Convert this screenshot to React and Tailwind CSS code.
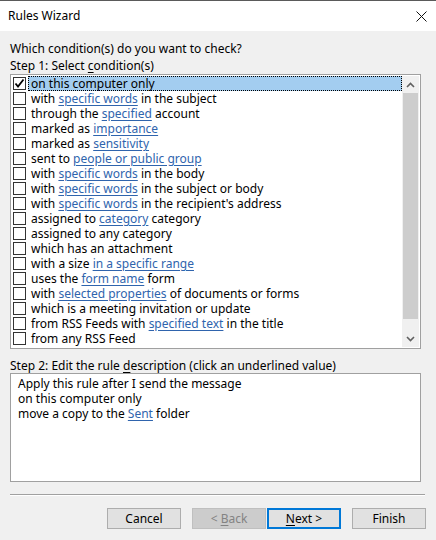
const conditions = [
  ["on this computer only"],
  ["with ", { link: "specific words" }, " in the subject"],
  ["through the ", { link: "specified" }, " account"],
  ["marked as ", { link: "importance" }],
  ["marked as ", { link: "sensitivity" }],
  ["sent to ", { link: "people or public group" }],
  ["with ", { link: "specific words" }, " in the body"],
  ["with ", { link: "specific words" }, " in the subject or body"],
  ["with ", { link: "specific words" }, " in the recipient's address"],
  ["assigned to ", { link: "category" }, " category"],
  ["assigned to any category"],
  ["which has an attachment"],
  ["with a size ", { link: "in a specific range" }],
  ["uses the ", { link: "form name" }, " form"],
  ["with ", { link: "selected properties" }, " of documents or forms"],
  ["which is a meeting invitation or update"],
  ["from RSS Feeds with ", { link: "specified text" }, " in the title"],
  ["from any RSS Feed"],
];

const Segments = ({ parts }) => (
  <span className="whitespace-pre">
    {parts.map((p, i) =>
      typeof p === "string" ? (
        p
      ) : (
        <span key={i} className="text-[#2f64ad] underline underline-offset-[2px] decoration-[#2f64ad]">
          {p.link}
        </span>
      )
    )}
  </span>
);

const Checkbox = ({ checked }) => (
  <div className="w-[13px] h-[13px] border border-[#333333] bg-white flex items-center justify-center shrink-0">
    {checked && (
      <svg width="11" height="11" viewBox="0 0 11 11">
        <path d="M1.5 5.5 L4 8.5 L9.5 1.5" fill="none" stroke="#000" strokeWidth="1.8" />
      </svg>
    )}
  </div>
);

const Chevron = ({ up }) => (
  <svg width="9" height="6" viewBox="0 0 9 6">
    <path
      d={up ? "M1 5 L4.5 1.5 L8 5" : "M1 1 L4.5 4.5 L8 1"}
      fill="none"
      stroke="#606060"
      strokeWidth="1.6"
    />
  </svg>
);

const buttonStyles = {
  normal: "border border-[#adadad] bg-[#e1e1e1] text-black",
  disabled: "border border-[#bfbfbf] bg-[#cccccc] text-[#838383]",
  default: "border-2 border-[#0078d7] bg-[#e1e1e1] text-black",
};

const Button = ({ children, variant = "normal", className = "" }) => (
  <button
    className={`w-[74px] h-[21px] text-[12px] leading-none flex items-center justify-center ${buttonStyles[variant]} ${className}`}
  >
    {children}
  </button>
);

const App = () => {
  return (
    <div
      className="w-[436px] h-[540px] bg-[#f0f0f0] flex flex-col text-[12px] text-[#000] overflow-hidden"
      style={{ fontFamily: '"Segoe UI", "Noto Sans", sans-serif' }}
    >
      {/* title bar */}
      <div className="h-[31px] bg-white border-t border-[#5a5a5a] flex items-center justify-between pl-[8px] pr-[9px] shrink-0">
        <span className="text-[12px]">Rules Wizard</span>
        <svg width="11" height="11" viewBox="0 0 11 11">
          <path d="M0.5 0.5 L10.5 10.5 M10.5 0.5 L0.5 10.5" stroke="#111" strokeWidth="1" />
        </svg>
      </div>

      <div className="flex flex-col pl-[10px] pt-[10px]">
        <div className="h-[15px] leading-[15px]">Which condition(s) do you want to check?</div>
        <div className="h-[15px] leading-[15px] mt-[2px]">
          Step 1: Select <span className="underline underline-offset-[2px]">c</span>ondition(s)
        </div>

        {/* conditions list */}
        <div className="w-[411px] h-[275px] mt-[1px] border border-[#a0a0a0] bg-white flex">
          <div className="flex-1 flex flex-col py-[1px]">
            {conditions.map((parts, i) => (
              <div key={i} className="h-[15px] flex items-center pl-[2px]">
                <Checkbox checked={i === 0} />
                <div
                  className={`ml-[2px] h-[15px] flex-1 flex items-center pl-[2px] whitespace-nowrap leading-[15px] ${
                    i === 0 ? "bg-[#a3cdf0] border border-dotted border-black" : "border border-transparent"
                  }`}
                >
                  <Segments parts={parts} />
                </div>
              </div>
            ))}
          </div>
          <div className="w-[17px] bg-[#f0f0f0] flex flex-col items-center my-[1px] mr-[1px]">
            <div className="h-[17px] flex items-center justify-center">
              <Chevron up />
            </div>
            <div className="w-[15px] flex-1 flex flex-col">
              <div className="h-[226px] bg-[#cdcdcd]" />
            </div>
            <div className="h-[17px] flex items-center justify-center">
              <Chevron />
            </div>
          </div>
        </div>

        <div className="h-[15px] leading-[15px] mt-[9px]">
          Step 2: Edit the rule <span className="underline underline-offset-[2px]">d</span>escription (click an
          underlined value)
        </div>

        {/* rule description */}
        <div className="w-[411px] h-[109px] border border-[#a0a0a0] bg-white pl-[7px] pt-[2px] flex flex-col">
          <div className="h-[15px] leading-[15px]">Apply this rule after I send the message</div>
          <div className="h-[15px] leading-[15px]">on this computer only</div>
          <div className="h-[15px] leading-[15px]">
            move a copy to the{" "}
            <span className="text-[#2f64ad] underline underline-offset-[2px]">Sent</span> folder
          </div>
        </div>

        <div className="w-[415px] h-[2px] mt-[12px] border-t border-[#a0a0a0] border-b border-b-white" />

        <div className="w-[416px] flex justify-end mt-[12px]">
          <Button>Cancel</Button>
          <Button variant="disabled" className="ml-[11px]">
            &lt;&nbsp;<span className="underline underline-offset-[2px]">B</span>ack
          </Button>
          <Button variant="default" className="ml-[1px]">
            <span className="underline underline-offset-[2px]">N</span>ext&nbsp;&gt;
          </Button>
          <Button className="ml-[11px]">Finish</Button>
        </div>
      </div>
    </div>
  );
};

export default App;
